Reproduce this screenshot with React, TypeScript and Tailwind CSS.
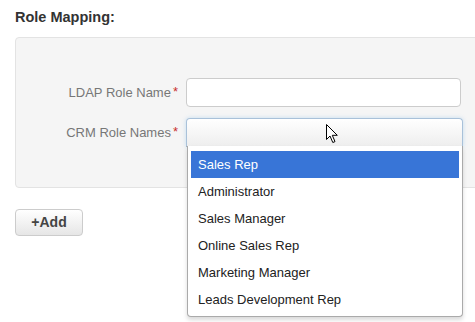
const roles = [
  "Sales Rep",
  "Administrator",
  "Sales Manager",
  "Online Sales Rep",
  "Marketing Manager",
  "Leads Development Rep",
];

function Cursor() {
  return (
    <svg width="13" height="20" viewBox="0 0 13 20" className="absolute left-[326px] top-[124px]">
      <path
        d="M0.5 0.5 L0.5 15.5 L4 12 L6.8 18.5 L9 17.6 L6.3 11.3 L11.3 11.3 Z"
        fill="#fff"
        stroke="#000"
        strokeWidth="1"
        strokeLinejoin="round"
      />
    </svg>
  );
}

function Field({ label, children }: { label: string; children: React.ReactNode }) {
  return (
    <div className="flex items-center">
      <label className="w-[162px] text-right text-[13px] text-[#777] pt-[1px]">
        {label}
        <span className="text-[#c9302c] ml-[2px] relative -top-[1px]">*</span>
      </label>
      <div className="ml-[8px]">{children}</div>
    </div>
  );
}

export default function App() {
  return (
    <div className="relative w-[475px] h-[322px] overflow-hidden bg-white font-['Liberation_Sans',Arial,sans-serif]">
      <div className="pl-[15px] pt-[7px]">
        <h3 className="text-[14.5px] leading-[20px] font-bold text-[#333]">Role Mapping:</h3>

        <div className="mt-[10px] w-[475px] h-[151px] bg-[#f5f5f5] border border-[#e3e3e3] rounded-[4px] pt-[40px] flex flex-col gap-[11px]">
          <Field label="LDAP Role Name">
            <input className="block w-[275px] h-[29px] bg-white border border-[#ccc] rounded-[4px] outline-none" />
          </Field>
          <Field label="CRM Role Names">
            <div className="w-[277px] h-[29px] bg-gradient-to-b from-white to-[#eeeeee] border border-[#a9c1d9] border-b-[#aaa] rounded-t-[4px] shadow-[0_0_4px_rgba(102,175,233,0.35)]" />
          </Field>
        </div>

        <button className="mt-[21px] w-[68px] h-[27px] flex items-center justify-center bg-gradient-to-b from-white to-[#e6e6e6] border border-[#ccc] rounded-[4px] text-[14px] font-bold text-[#444]">
          +Add
        </button>
      </div>

      <ul className="absolute left-[187px] top-[146px] w-[276px] h-[171px] bg-white border border-t-0 border-[#aaa] rounded-b-[4px] shadow-[0_3px_4px_rgba(0,0,0,0.15)] pt-[5px] px-[3px]">
        {roles.map((r, i) => (
          <li
            key={r}
            className={
              i === 0
                ? "h-[27px] flex items-center pl-[7px] text-[13px] bg-[#3875d7] text-white"
                : "h-[27px] flex items-center pl-[7px] text-[13px] text-[#222]"
            }
          >
            {r}
          </li>
        ))}
      </ul>

      <Cursor />
    </div>
  );
}
